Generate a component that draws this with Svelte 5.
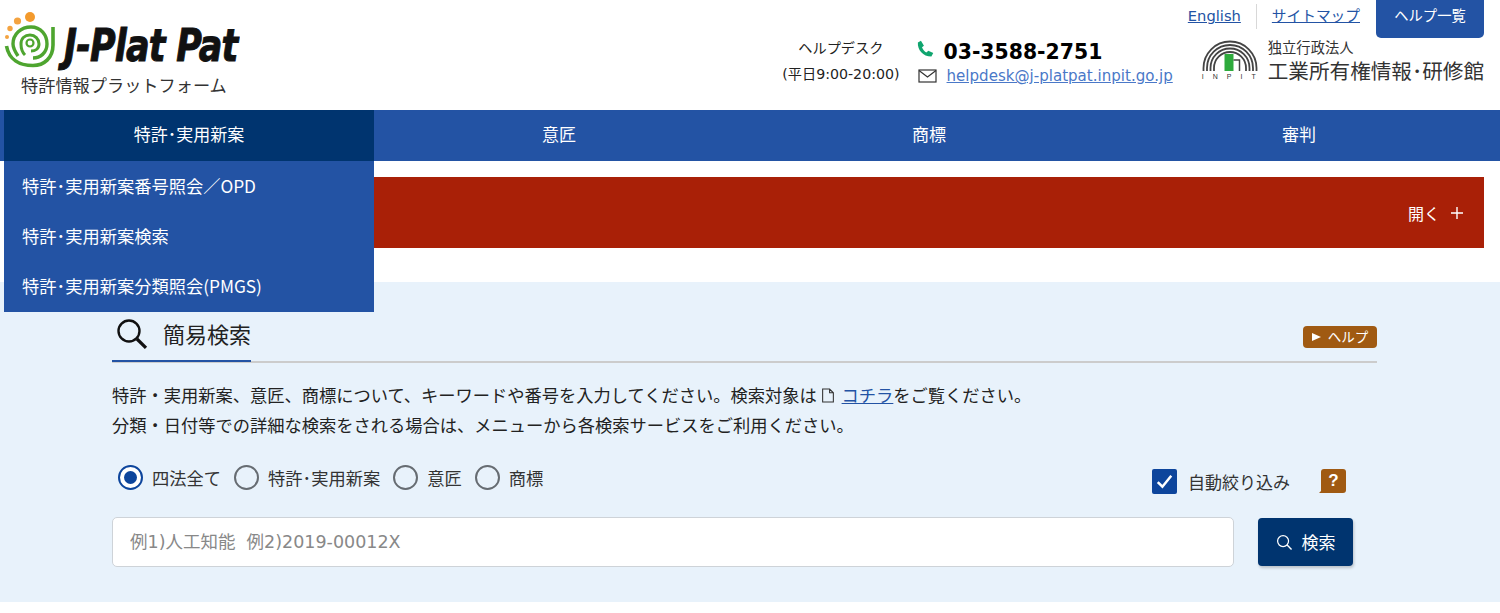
<script>
    const tabs = ["特許･実用新案", "意匠", "商標", "審判"];
    const menu = ["特許･実用新案番号照会／OPD", "特許･実用新案検索", "特許･実用新案分類照会(PMGS)"];
    const kinds = ["四法全て", "特許･実用新案", "意匠", "商標"];
    let kind = 0;
    let auto = true;
</script>

<div class="page">
    <header class="header">
        <div class="logo">
            <svg class="logo-mark" width="56" height="70" viewBox="4 0 56 70">
                <circle cx="30" cy="17" r="5" fill="#f39a2d" />
                <circle cx="17.500" cy="21" r="3.600" fill="#f4a340" />
                <circle cx="10" cy="28.500" r="2.700" fill="#f4a340" />
                <circle cx="7" cy="37" r="2" fill="#f4a340" />
                <path d="M53 27V45C53 58 44 65.500 33 65.500C20 65.500 9 60 6.500 46" fill="none" stroke="#4ea52f" stroke-width="3.600" />
                <path d="M18 56C14 50 13 47 13 44C13 34 21 27 31 27C41 27 47 35 47 44C47 53 40 58 33 58" fill="none" stroke="#4ea52f" stroke-width="3.400" />
                <path d="M25 55C22 52 21 48 21 44C21 38 25 35 30 35C35 35 39 39 39 44C39 49 35 51 31 51" fill="none" stroke="#4ea52f" stroke-width="3" />
                <circle cx="30" cy="43" r="3.500" fill="none" stroke="#4ea52f" stroke-width="2.200" />
            </svg>
            <div class="logo-text">
                <div class="logo-name">J-Plat Pat</div>
                <div class="logo-sub">特許情報プラットフォーム</div>
            </div>
        </div>

        <div class="header-right">
            <div class="top-links">
                <a href="#top" class="link">English</a>
                <span class="divider"></span>
                <a href="#top" class="link">サイトマップ</a>
                <button type="button" class="help-list">ヘルプ一覧</button>
            </div>
            <div class="contact">
                <div class="desk">
                    <div>ヘルプデスク</div>
                    <div>(平日9:00-20:00)</div>
                </div>
                <div class="contact-lines">
                    <div class="tel">
                        <svg width="18" height="18" viewBox="0 0 24 24">
                            <path d="M6.600 1 2.500 3.200c-.4 5 1.300 9.500 4.500 13s7.700 5.700 13.500 5.800l2.500-4.800-6.500-3-2.800 2.300c-2.600-1.300-4.700-3.800-5.700-6.800l2.600-2z" fill="#10a56f" />
                        </svg>
                        <span>03-3588-2751</span>
                    </div>
                    <div class="mail">
                        <svg width="19" height="14" viewBox="0 0 19 14">
                            <rect x="1" y="1" width="17" height="12" fill="none" stroke="#333" stroke-width="1.200" />
                            <path d="M1 1.500 9.500 8 18 1.500" fill="none" stroke="#333" stroke-width="1.200" />
                        </svg>
                        <a href="#top" class="mail-link">helpdesk@j-platpat.inpit.go.jp</a>
                    </div>
                </div>
                <div class="inpit">
                    <div class="inpit-mark">
                        <svg width="56" height="32" viewBox="0 0 56 32">
                            <path d="M1.500 31V28a26.500 26.500 0 0 1 53 0v3M5 31V28a23 23 0 0 1 46 0v3M8.500 31V28a19.500 19.500 0 0 1 39 0v3M12 31V28a16 16 0 0 1 32 0v3" fill="none" stroke="#444" stroke-width="1.800" />
                            <rect x="22.500" y="14" width="9" height="17" fill="#2eaa3c" />
                            <path d="M31.500 20h6v11" fill="none" stroke="#444" stroke-width="1.500" />
                        </svg>
                        <div class="inpit-name">INPIT</div>
                    </div>
                    <div class="inpit-text">
                        <div class="inpit-small">独立行政法人</div>
                        <div class="inpit-big">工業所有権情報･研修館</div>
                    </div>
                </div>
            </div>
        </div>
    </header>

    <nav class="nav">
        {#each tabs as tab, i}
            <div class="tab" class:active={i === 0}>{tab}</div>
        {/each}
        <div class="dropdown">
            {#each menu as item}
                <div class="dropdown-item">{item}</div>
            {/each}
        </div>
    </nav>

    <div class="notice-wrap">
        <div class="notice">
            <span>開く</span>
            <svg width="14" height="14" viewBox="0 0 14 14">
                <path d="M7 1v12M1 7h12" stroke="#fff" stroke-width="1.400" />
            </svg>
        </div>
    </div>

    <main class="main">
        <div class="title-row">
            <div class="title">
                <svg width="34" height="34" viewBox="0 0 34 34">
                    <circle cx="14" cy="13" r="10.500" fill="none" stroke="#111" stroke-width="2.400" />
                    <path d="M22 21l9 9" stroke="#111" stroke-width="3.200" />
                </svg>
                <h1>簡易検索</h1>
            </div>
            <div class="help-badge"><span class="tri"></span>ヘルプ</div>
        </div>

        <div class="intro">
            <p>
                特許・実用新案、意匠、商標について、キーワードや番号を入力してください。検索対象は
                <svg class="doc" width="14" height="15" viewBox="0 0 13 14">
                    <path d="M1.500 1h6.500l3.500 3.500V13h-10zM8 1v3.500h3.500" fill="none" stroke="#333" stroke-width="1" />
                </svg>
                <a href="#top" class="link">コチラ</a>をご覧ください。
            </p>
            <p>分類・日付等での詳細な検索をされる場合は、メニューから各検索サービスをご利用ください。</p>
        </div>

        <div class="options">
            <div class="radios">
                {#each kinds as label, i}
                    <label class="radio">
                        <input type="radio" name="kind" value={i} bind:group={kind} />
                        <span class="radio-dot"></span>
                        <span>{label}</span>
                    </label>
                {/each}
            </div>
            <div class="auto">
                <label class="check">
                    <input type="checkbox" bind:checked={auto} />
                    <span class="check-box">
                        {#if auto}
                            <svg width="25" height="25" viewBox="0 0 24 24">
                                <path d="M5.500 12.500l4.500 4.500L18.500 6.500" fill="none" stroke="#fff" stroke-width="2.400" />
                            </svg>
                        {/if}
                    </span>
                    <span>自動絞り込み</span>
                </label>
                <div class="question">?</div>
            </div>
        </div>

        <div class="search-row">
            <input class="search-input" type="text" placeholder="例1)人工知能&nbsp;&nbsp;例2)2019-00012X" />
            <button type="button" class="search-btn">
                <svg width="17" height="17" viewBox="0 0 18 18">
                    <circle cx="7.500" cy="7.500" r="5.800" fill="none" stroke="#fff" stroke-width="1.300" />
                    <path d="M11.500 11.500l5 5" stroke="#fff" stroke-width="1.500" />
                </svg>
                <span class="search-label">検索</span>
            </button>
        </div>
    </main>
</div>

<style>
    :global(body) {
        margin: 0;
        background: #fff;
        font-family: "Noto Sans CJK JP", sans-serif;
        color: #222;
    }

    .page {
        height: 602px;
        overflow: hidden;
        display: flex;
        flex-direction: column;
    }

    .header {
        height: 110px;
        display: flex;
        justify-content: space-between;
        padding: 0 16px 0 4px;
    }

    .logo {
        display: flex;
        align-items: flex-start;
    }

    .logo-text {
        padding-top: 30px;
    }

    .logo-name {
        font-family: "DejaVu Sans", sans-serif;
        font-weight: 700;
        font-style: italic;
        font-size: 35px;
        line-height: 42px;
        letter-spacing: -0.800px;
        margin-left: 4px;
        color: #111;
        white-space: nowrap;
        -webkit-text-stroke: 0.800px #111;
        transform: scaleY(1.250);
        transform-origin: bottom;
    }

    .logo-sub {
        font-size: 17.200px;
        line-height: 22px;
        color: #333;
        margin-left: -39px;
        margin-top: 2px;
        white-space: nowrap;
    }

    .header-right {
        display: flex;
        flex-direction: column;
        align-items: flex-end;
    }

    .top-links {
        display: flex;
        align-items: flex-start;
        font-size: 15px;
    }

    .top-links .link {
        margin-top: 6px;
        line-height: 20px;
        font-family: "DejaVu Sans", "Noto Sans CJK JP", sans-serif;
        font-size: 14.700px;
    }

    .divider {
        width: 1px;
        height: 25px;
        background: #d8d8d8;
        margin: 4px 15px 0;
    }

    .link {
        color: #2353a4;
        text-decoration: underline;
    }

    .help-list {
        width: 108px;
        height: 38px;
        margin-left: 16px;
        padding: 0 0 9px;
        border: 0;
        border-radius: 0 0 5px 5px;
        background: #2353a4;
        color: #fff;
        font: 14.300px "Noto Sans CJK JP", sans-serif;
    }

    .contact {
        display: flex;
        align-items: flex-start;
        margin-top: 1px;
    }

    .desk {
        font-family: "DejaVu Sans", "Noto Sans CJK JP", sans-serif;
        font-size: 14.200px;
        line-height: 26px;
        text-align: center;
        color: #222;
        margin-top: -4px;
    }

    .contact-lines {
        margin-left: 18px;
    }

    .tel {
        display: flex;
        align-items: center;
        gap: 10px;
        height: 26px;
        margin-left: -2px;
        font-family: "DejaVu Sans", sans-serif;
        font-weight: 700;
        font-size: 20.400px;
        color: #000;
    }

    .tel svg {
        margin-top: -7px;
    }

    .mail {
        display: flex;
        align-items: center;
        gap: 10px;
        height: 22px;
        font-family: "DejaVu Sans", sans-serif;
        font-size: 15.070px;
    }

    .mail-link {
        color: #4a78c8;
        text-decoration: underline;
    }

    .inpit {
        display: flex;
        margin-left: 29px;
        margin-top: -2px;
    }

    .inpit-mark {
        width: 56px;
        margin-top: 3px;
    }

    .inpit-mark svg {
        display: block;
    }

    .inpit-name {
        font-family: "Liberation Sans", sans-serif;
        font-size: 7px;
        letter-spacing: 9px;
        line-height: 8px;
        margin-top: 1px;
        color: #333;
        white-space: nowrap;
    }

    .inpit-text {
        margin-left: 10px;
        color: #333;
    }

    .inpit-small {
        font-size: 14.300px;
        line-height: 20px;
    }

    .inpit-big {
        font-size: 20.600px;
        line-height: 26px;
        white-space: nowrap;
    }

    .nav {
        position: relative;
        height: 51px;
        padding: 0 16px 0 4px;
        display: grid;
        grid-template-columns: repeat(4, 1fr);
        background: #2353a4;
        color: #fff;
        font-size: 17px;
    }

    .tab {
        display: flex;
        align-items: center;
        justify-content: center;
        padding-bottom: 4px;
    }

    .tab.active {
        background: #00346f;
    }

    .dropdown {
        position: absolute;
        top: 51px;
        left: 4px;
        width: 370px;
        height: 151px;
        background: #2353a4;
        z-index: 2;
    }

    .dropdown-item {
        height: 48.300px;
        padding: 0 0 2px 18px;
        display: flex;
        align-items: center;
        font-size: 17.250px;
    }

    .notice-wrap {
        padding: 16px 16px 34px 4px;
    }

    .notice {
        height: 71px;
        background: #a92007;
        color: #fff;
        font-size: 16px;
        display: flex;
        align-items: center;
        justify-content: flex-end;
        gap: 10px;
        padding-right: 20px;
    }

    .main {
        flex: 1;
        background: #e8f2fb;
        padding: 29px 123px 0 112px;
    }

    .title-row {
        height: 50px;
        display: flex;
        justify-content: space-between;
        align-items: center;
        border-bottom: 2px solid #cccccc;
    }

    .title {
        width: 139px;
        height: 50px;
        margin-bottom: -2px;
        border-bottom: 2px solid #2353a4;
        display: flex;
        align-items: center;
        gap: 14px;
        padding-left: 3px;
        box-sizing: border-box;
    }

    .title svg {
        margin-top: -3px;
    }

    .title h1 {
        margin: -7px 0 0;
        font-size: 22px;
        font-weight: 400;
        white-space: nowrap;
    }

    .help-badge {
        width: 74px;
        height: 22px;
        padding-bottom: 2px;
        box-sizing: border-box;
        border-radius: 4px;
        background: #a05a12;
        color: #fff;
        font-size: 13.500px;
        display: flex;
        align-items: center;
        justify-content: center;
        gap: 7px;
        margin-top: 1px;
    }

    .tri {
        width: 0;
        height: 0;
        margin-top: 2px;
        border-left: 9px solid #fff;
        border-top: 4.500px solid transparent;
        border-bottom: 4.500px solid transparent;
    }

    .intro {
        margin-top: 17px;
        font-size: 17.250px;
        line-height: 30px;
    }

    .intro p {
        margin: 0;
        white-space: nowrap;
    }

    .doc {
        vertical-align: -1px;
        margin-right: 3px;
    }

    .options {
        margin-top: 20px;
        display: flex;
        justify-content: space-between;
        padding: 0 31px 0 6px;
        height: 34px;
    }

    .radios {
        display: flex;
        gap: 13px;
    }

    .radio {
        display: flex;
        align-items: center;
        gap: 9px;
        font-size: 17.250px;
        color: #333;
    }

    .radio input,
    .check input {
        display: none;
    }

    .radio-dot {
        width: 21px;
        height: 21px;
        border: 2px solid #666c72;
        border-radius: 50%;
        position: relative;
    }

    .radio input:checked + .radio-dot {
        border-color: #0d459c;
        background: #fff;
    }

    .radio input:checked + .radio-dot::after {
        content: "";
        position: absolute;
        inset: 4px;
        border-radius: 50%;
        background: #0d459c;
    }

    .auto {
        display: flex;
        align-items: center;
        margin-top: 9px;
    }

    .check {
        display: flex;
        align-items: center;
        gap: 11px;
        font-size: 17px;
        color: #333;
    }

    .check-box {
        width: 25px;
        height: 25px;
        border-radius: 2px;
        background: #0d459c;
        display: flex;
        align-items: center;
        justify-content: center;
    }

    .question {
        position: relative;
        width: 25px;
        height: 24px;
        margin-left: 31px;
        margin-top: -2px;
        background: #a05a12;
        border-radius: 3px;
        color: #fff;
        font: 700 17px "Liberation Sans", sans-serif;
        display: flex;
        align-items: center;
        justify-content: center;
    }

    .question::after {
        content: "";
        position: absolute;
        left: -2px;
        bottom: 0;
        border-right: 5px solid #a05a12;
        border-top: 5px solid transparent;
    }

    .search-row {
        margin-top: 23px;
        display: flex;
        justify-content: space-between;
        align-items: center;
        padding-right: 24px;
    }

    .search-input {
        width: 1122px;
        height: 50px;
        box-sizing: border-box;
        border: 1px solid #ced3d8;
        border-radius: 5px;
        background: #fff;
        padding: 0 17px;
        font: 17.500px "DejaVu Sans", "Noto Sans CJK JP", sans-serif;
    }

    .search-input::placeholder {
        color: #888;
    }

    .search-btn {
        width: 95px;
        height: 48px;
        border: 0;
        border-radius: 4px;
        background: #00346f;
        color: #fff;
        font: 17px "Noto Sans CJK JP", sans-serif;
        display: flex;
        align-items: center;
        justify-content: center;
        gap: 9px;
        box-shadow: 1px 2px 3px rgba(0, 0, 0, 0.2);
    }

    .search-label {
        margin-top: -2px;
    }
</style>
